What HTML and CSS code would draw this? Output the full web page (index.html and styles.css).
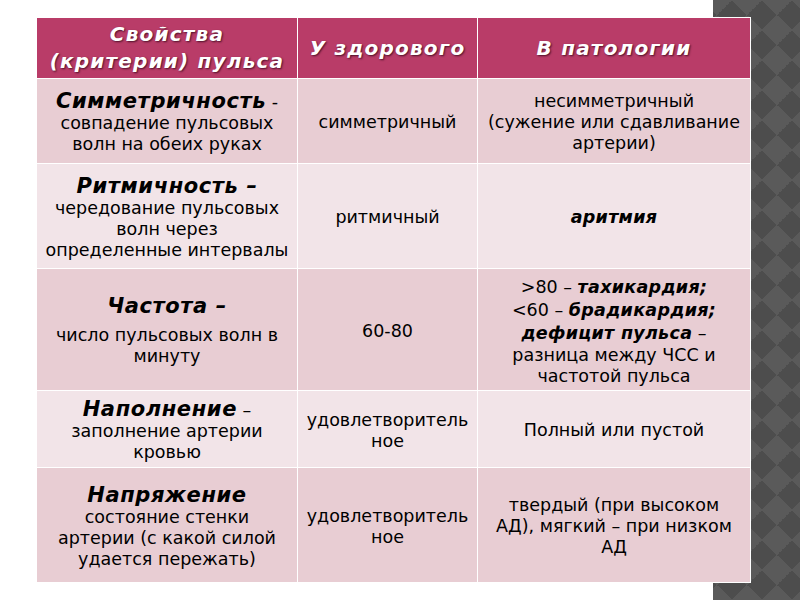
FILE: index.html
```html
<!DOCTYPE html>
<html lang="ru">
<head>
<meta charset="utf-8">
<title>Свойства пульса</title>
<link rel="stylesheet" href="styles.css">
</head>
<body>
<div class="page">
  <div class="strip"></div>
  <table class="pulse">
    <colgroup>
      <col class="c1"><col class="c2"><col class="c3">
    </colgroup>
    <thead>
      <tr class="rh">
        <th>Свойства<br>(критерии) пульса</th>
        <th>У здорового</th>
        <th>В патологии</th>
      </tr>
    </thead>
    <tbody>
      <tr class="r1 odd">
        <td><b>Симметричность</b> -<br>совпадение пульсовых<br>волн на обеих руках</td>
        <td>симметричный</td>
        <td>несимметричный<br>(сужение или сдавливание<br>артерии)</td>
      </tr>
      <tr class="r2 even">
        <td><b>Ритмичность –</b><br>чередование пульсовых<br>волн через<br>определенные интервалы</td>
        <td>ритмичный</td>
        <td><b class="em">аритмия</b></td>
      </tr>
      <tr class="r3 odd">
        <td><p class="ttl"><b>Частота –</b></p><p>число пульсовых волн в<br>минуту</p></td>
        <td>60-80</td>
        <td>&gt;80 – <b class="em">тахикардия;</b><br>&lt;60 – <b class="em">брадикардия;</b><br><b class="em">дефицит пульса</b> –<br>разница между ЧСС и<br>частотой пульса</td>
      </tr>
      <tr class="r4 even">
        <td><b>Наполнение</b> –<br>заполнение артерии<br>кровью</td>
        <td>удовлетворитель<br>ное</td>
        <td>Полный или пустой</td>
      </tr>
      <tr class="r5 odd">
        <td><b>Напряжение</b><br>состояние стенки<br>артерии (с какой силой<br>удается пережать)</td>
        <td>удовлетворитель<br>ное</td>
        <td>твердый (при высоком<br>АД), мягкий – при низком<br>АД</td>
      </tr>
    </tbody>
  </table>
</div>
</body>
</html>
```
FILE: styles.css
```css
html, body {
  margin: 0;
  padding: 0;
  background: #ffffff;
}
.page {
  width: 800px;
  height: 600px;
  display: grid;
  grid-template-columns: 36px 677px 37px 50px;
  grid-template-rows: 17px 565px 18px;
  overflow: hidden;
  font-family: "DejaVu Sans", Verdana, sans-serif;
  color: #000;
}
.strip {
  grid-column: 3 / 5;
  grid-row: 1 / 4;
  background-color: #4d4d4d;
  background-image:
    linear-gradient(45deg, #5a5a5a 25%, transparent 25%, transparent 75%, #5a5a5a 75%),
    linear-gradient(-45deg, #5a5a5a 25%, transparent 25%, transparent 75%, #5a5a5a 75%);
  background-size: 30px 30px;
  background-position: 4px 0;
}
.pulse {
  grid-column: 2 / 4;
  grid-row: 2 / 3;
  position: relative;
  z-index: 1;
  width: 714px;
  height: 565px;
  border-collapse: collapse;
  table-layout: fixed;
  border: 1px solid #fff;
}
.c1 { width: 261px; }
.c2 { width: 180px; }
.c3 { width: 273px; }
.pulse th, .pulse td {
  border: 1px solid #fff;
  text-align: center;
  vertical-align: middle;
  padding: 3px 2px 0;
  font-size: 17.5px;
  line-height: 21px;
}
.pulse th {
  background: #b93c68;
  color: #fff;
  font-style: italic;
  font-weight: bold;
  font-size: 20px;
  letter-spacing: 1.2px;
  line-height: 27px;
  padding-top: 0;
  text-shadow: 1px 1px 2px rgba(40, 0, 20, 0.75);
}
.rh { height: 61px; }
.r1 { height: 85px; }
.r2 { height: 105px; }
.r3 { height: 122px; }
.r4 { height: 77px; }
.r5 { height: 115px; }
.odd td { background: #e8cdd3; }
.even td { background: #f2e4e8; }
.pulse td b {
  font-style: italic;
  font-weight: bold;
  font-size: 21px;
  letter-spacing: 0.6px;
  line-height: 23px;
}
.pulse td b.em {
  font-size: 17.5px;
  letter-spacing: 0.3px;
}
.pulse p {
  margin: 0;
}
.pulse p.ttl {
  margin-bottom: 7px;
}
```
